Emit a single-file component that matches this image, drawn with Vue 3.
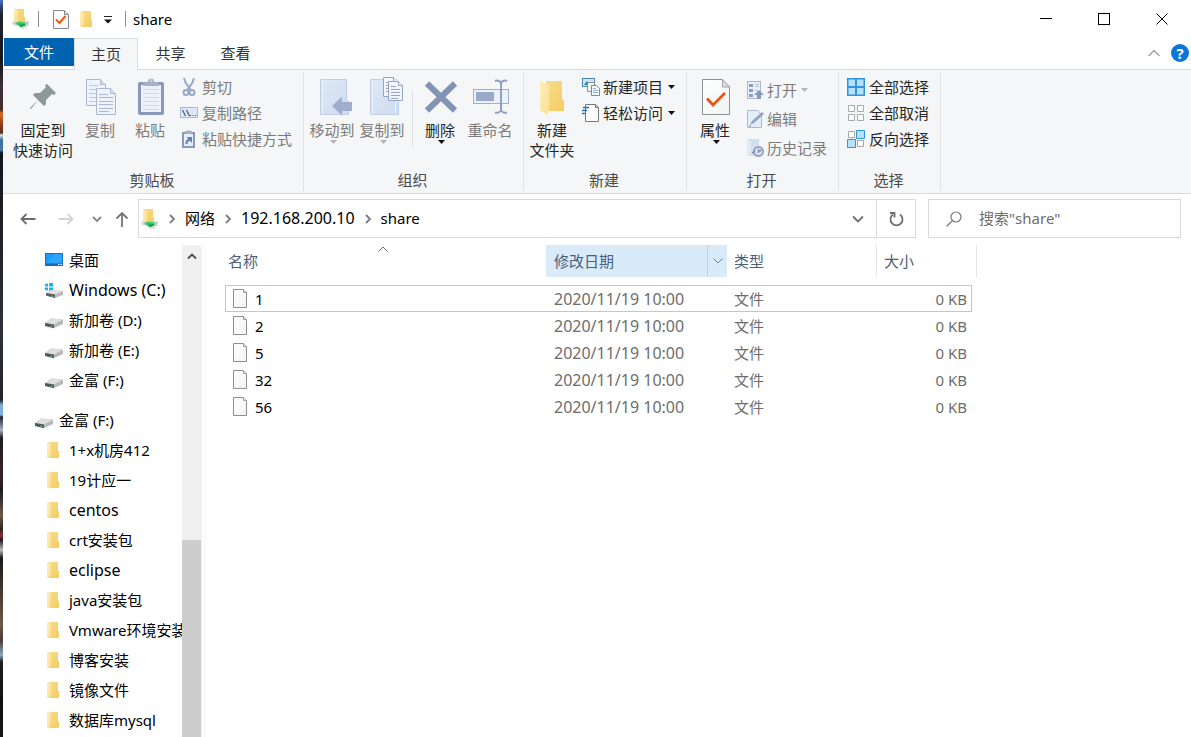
<script setup>
import { ref } from 'vue'

const query = ref('')
const drives = [
  { name: '桌面', icon: 'desktop' },
  { name: 'Windows (C:)', icon: 'windrive', latin: true },
  { name: '新加卷 (D:)', icon: 'drive' },
  { name: '新加卷 (E:)', icon: 'drive' },
  { name: '金富 (F:)', icon: 'drive' }
]
const folders = [
  { name: '1+x机房412' },
  { name: '19计应一' },
  { name: 'centos', latin: true },
  { name: 'crt安装包' },
  { name: 'eclipse', latin: true },
  { name: 'java安装包' },
  { name: 'Vmware环境安装' },
  { name: '博客安装' },
  { name: '镜像文件' },
  { name: '数据库mysql' }
]
const files = ['1', '2', '5', '32', '56']
</script>

<template>
  <div class="desktop">
    <svg width="0" height="0" class="defs" aria-hidden="true">
      <defs>
        <linearGradient id="gold" x1="0" y1="0" x2="1" y2="1">
          <stop offset="0" stop-color="#f8dc8c" /><stop offset="1" stop-color="#f3cd62" />
        </linearGradient>
        <linearGradient id="flap" x1="0" y1="0" x2="1" y2="1">
          <stop offset="0" stop-color="#ffeeb8" /><stop offset="1" stop-color="#fbdf92" />
        </linearGradient>
        <linearGradient id="paper" x1="0" y1="0" x2="1" y2="1">
          <stop offset="0" stop-color="#ffffff" /><stop offset="1" stop-color="#f1f3f4" />
        </linearGradient>
        <linearGradient id="bluefolder" x1="0" y1="0" x2="1" y2="1">
          <stop offset="0" stop-color="#dfe8f6" /><stop offset="1" stop-color="#cddcf0" />
        </linearGradient>
        <symbol id="folder" viewBox="0 0 14 18">
          <path d="M3 1h9v9h1v7H3z" fill="url(#gold)" />
          <path d="M1 1l4 2v11l-3 3-1-1z" fill="url(#flap)" />
        </symbol>
        <symbol id="netfolder" viewBox="0 0 18 20">
          <path d="M3 0h9v8h1v5H3z" fill="url(#gold)" />
          <path d="M2 0l4 2v10l-2 1-2-1z" fill="url(#flap)" />
          <path d="M0 13l3-1 3 3-2 2-3-1z" fill="#d3d7d9" />
          <path d="M11 15l4-3 2 1-1 4-4 1z" fill="#c6cbcd" />
          <path d="M7 17h6l2 2-4 1-4-1z" fill="#d9dcdd" />
          <path d="M3 14l4-1.500 7 1-1 3-4 1.500-4-2z" fill="#3cc96b" />
          <path d="M7 15.500l6-.5v1.500L9 18z" fill="#1b9c48" />
        </symbol>
        <symbol id="drive" viewBox="0 0 18 12">
          <path d="M0 6l6-4.500 12 1v4.500l-9 4-9-2.500z" fill="#b7b9bb" />
          <path d="M0 6l6-4.500 12 1-9 5z" fill="#dedfe0" />
          <path d="M0 6l9 1.500v3.800L0 9z" fill="#55595b" />
          <path d="M5.500 8.500l2 .4v1.200l-2-.4z" fill="#4bd65c" />
        </symbol>
        <symbol id="windrive" viewBox="0 0 20 18">
          <path d="M1 3l3-.5v3H1zM5 2.300l4-.6v3.800H5zM1 6.500h3v3L1 9zM5 6.500h4v3.800L5 9.700z" fill="#12b5ee" />
          <path d="M2 12l5-3 12 1v4l-8 3-9-2.500z" fill="#b9bbbd" />
          <path d="M2 12l5-3 12 1-8 3.500z" fill="#e2e3e4" />
          <path d="M2 12l9 1.500V17l-9-2.500z" fill="#5b5f61" />
          <path d="M7.500 14.500l2 .4v1.100l-2-.4z" fill="#4bd65c" />
        </symbol>
        <symbol id="desktop" viewBox="0 0 18 14">
          <rect x=".5" y=".5" width="17" height="12" fill="#1e9bf5" stroke="#0f76c4" />
          <path d="M1 11.500h16" stroke="#0d6fc0" stroke-width="2" />
          <path d="M13 11.500h1.500M15.500 11.500H17" stroke="#fff" />
          <path d="M1 10L11 1h6v9z" fill="#3bb0ff" opacity=".5" />
        </symbol>
        <symbol id="checkdoc" viewBox="0 0 28 36">
          <path d="M.5.500h20l7 7.500v27.500H.5z" fill="url(#paper)" stroke="#8c9093" />
          <path d="M20.500.500V8h7z" fill="#dcdfe1" stroke="#a2a5a8" />
        </symbol>
        <symbol id="chev" viewBox="0 0 12 12">
          <path d="M4 2l4 4-4 4" fill="none" stroke="#7b7b7b" stroke-width="1.800" />
        </symbol>
        <symbol id="blank" viewBox="0 0 16 19">
          <path d="M1.500.500h10l3 3v15h-13z" fill="url(#paper)" stroke="#8f8f8f" />
          <path d="M11.500.500v3h3" fill="#e6e6e6" stroke="#a0a0a0" />
        </symbol>
      </defs>
    </svg>

    <main class="window">
      <header class="titlebar">
        <svg class="ic-net" width="18" height="20"><use href="#netfolder" /></svg>
        <span class="bar"></span>
        <button class="quick check" aria-label="属性">
          <svg width="16" height="19" viewBox="0 0 16 19">
            <path d="M.5.500h11l4 4v14H.5z" fill="#fafafa" stroke="#85898c" /><path d="M11.500.500v4h4" fill="#ddd" stroke="#85898c" />
            <path d="M3 9.500L6.500 13 12.500 6" fill="none" stroke="#ee5a12" stroke-width="2" />
          </svg>
        </button>
        <button class="quick fold" aria-label="新建文件夹"><svg width="14" height="18"><use href="#folder" /></svg></button>
        <button class="quick more" aria-label="自定义快速访问工具栏">
          <svg width="8" height="8" viewBox="0 0 8 8"><path d="M0 .5h8" stroke="#222" /><path d="M0 3.500h8l-4 4z" fill="#111" /></svg>
        </button>
        <span class="bar"></span>
        <h1>share</h1>
        <div class="controls">
          <button aria-label="最小化"><svg width="12" height="12"><path d="M0 5.500h12" stroke="#000" /></svg></button>
          <button aria-label="最大化"><svg width="12" height="12"><rect x=".5" y=".5" width="11" height="11" fill="none" stroke="#000" /></svg></button>
          <button aria-label="关闭"><svg width="12" height="12"><path d="M.5.500l11 11M11.500.500l-11 11" stroke="#000" /></svg></button>
        </div>
      </header>

      <nav class="tabs">
        <button class="file">文件</button>
        <button class="active">主页</button>
        <button>共享</button>
        <button>查看</button>
        <span class="grow"></span>
        <button class="collapse" aria-label="折叠功能区"><svg width="12" height="8"><path d="M.5 7L6 1.500 11.500 7" fill="none" stroke="#a0a0a0" stroke-width="1.300" /></svg></button>
        <button class="help" aria-label="帮助">?</button>
      </nav>

      <div class="ribbon">
        <section class="group clip">
          <div class="body">
            <button class="big pin">
              <svg width="40" height="40"><path d="M24 8l9 9-2 2-2-1-6 6v4l-2 2-6-6-7 9-1-1 8-8-5-5 2-2h5l6-6-1-2z" fill="#8d9899" /></svg>
              <span>固定到<br>快速访问</span>
            </button>
            <button class="big off">
              <svg width="40" height="40" fill="#eef3fb" stroke="#a9b8d4">
                <path d="M6.500 3.500h14l5 5v21h-19z" /><path d="M20.500 3.500v5h5" fill="#d6e0f0" />
                <path d="M9 9.500h9M9 13.500h14M9 17.500h14M9 21.500h14M9 25.500h14" stroke="#bccbe3" />
                <path d="M16.500 12.500h14l5 5v21h-19z" /><path d="M30.500 12.500v5h5" fill="#d6e0f0" />
                <path d="M19 18.500h9M19 21.500h14M19 25.500h14M19 28.500h14M19 32.500h14M19 35.500h10" stroke="#a9b8d4" />
              </svg>
              <span>复制</span>
            </button>
            <button class="big off">
              <svg width="40" height="40">
                <rect x="8" y="6" width="26" height="33" rx="2" fill="#8999b9" /><rect x="11" y="9" width="20" height="27" fill="#eef3fb" />
                <path d="M13 13.500h16M13 17.500h16M13 21.500h16M13 25.500h16M13 29.500h16M13 33.500h16" stroke="#cdd9ec" />
                <path d="M13 10V7l5-1.500a3 3 0 0 1 6 0L29 7v3z" fill="#a7b2c8" /><circle cx="21" cy="4.500" r="1.500" fill="#c7cfde" />
              </svg>
              <span>粘贴</span>
            </button>
            <div class="smalls">
              <button class="off">
                <svg width="18" height="18" fill="none" stroke="#98a9c8" stroke-width="2"><path d="M4 0c1 6 4 8 7 12M14 0c-1 6-4 8-7 12" /><circle cx="6" cy="14.500" r="2.500" /><circle cx="12" cy="14.500" r="2.500" /></svg>
                <span>剪切</span>
              </button>
              <button class="off">
                <svg width="18" height="18"><rect x=".5" y="3.500" width="17" height="10" fill="#dde7f5" stroke="#a9bad6" /><path d="M2.500 6l3 6M6.500 6l3 6" stroke="#52627e" stroke-width="1.300" /><path d="M10 11.500h1.200M12.500 11.500h1.200M15 11.500h1.200" stroke="#52627e" /></svg>
                <span>复制路径</span>
              </button>
              <button class="off">
                <svg width="18" height="18"><path d="M3 3h11v14H3z" fill="#e6eef9" stroke="#8999b9" stroke-width="2" /><path d="M5 4V1h2l1.500-1L10 1h2v3z" fill="#a7b2c8" /><path d="M5.500 14c0-4 2-5 3-5l-2-2h5.500v6l-2-2c-2 0-2.500 1-2.500 3z" fill="#6e7fa3" /></svg>
                <span>粘贴快捷方式</span>
              </button>
            </div>
          </div>
          <h2>剪贴板</h2>
        </section>

        <section class="group org">
          <div class="body">
            <button class="big off">
              <svg width="40" height="40"><path d="M8.500 3.500h26v20l2 2v13h-28z" fill="url(#bluefolder)" stroke="#c0cfe6" /><path d="M10.500 4v34" stroke="#eaf0fa" /><path d="M20 30l10-9.500V26h10v9H30v4.500z" fill="#a0aecb" /></svg>
              <span>移动到</span><i class="tri"></i>
            </button>
            <button class="big off">
              <svg width="40" height="40" class="spill"><path d="M8.500 3.500h26v20l2 2v13h-28z" fill="url(#bluefolder)" stroke="#c0cfe6" /><path d="M10.500 4v34M33.500 38V27l2-2" stroke="#eaf0fa" fill="none" />
                <g fill="#f2f6fc" stroke="#94a5c6"><path d="M21.500 1.500h10l4 4v15h-14z" /><path d="M31.500 1.500v4h4M24 6.500h6M24 9.500h6M24 12.500h3M24 15.500h3" /><path d="M26.500 5.500h10l4 4v15h-14z" /><path d="M36.500 5.500v4h4M29 10.500h5M29 13.500h9M29 16.500h9M29 19.500h9M29 22.500h7" /></g></svg>
              <span>复制到</span><i class="tri"></i>
            </button>
            <span class="divider"></span>
            <button class="big">
              <svg width="40" height="40"><path d="M7 7.500l28 27M35 7.500l-28 27" stroke="#8293b5" stroke-width="6" /></svg>
              <span>删除</span><i class="tri"></i>
            </button>
            <button class="big off">
              <svg width="40" height="40"><rect x="3.500" y="13.500" width="35" height="14" fill="#eaf1fb" stroke="#9fb0cf" /><rect x="6" y="16" width="18" height="9" fill="#99a9c8" /><path d="M31 6v29M25 5c3-1 6 0 6 3 0-3 3-4 6-3M25 36.500c3 1 6-.5 6-3.500 0 3 3 4.500 6 3.500" fill="none" stroke="#8fa0c1" stroke-width="2" /></svg>
              <span>重命名</span>
            </button>
          </div>
          <h2>组织</h2>
        </section>

        <section class="group new">
          <div class="body">
            <button class="big">
              <svg width="40" height="40"><path d="M14 5h16v18l2 1v11H14z" fill="url(#gold)" /><path d="M8 5l9 4v26l-2 4-7-5z" fill="url(#flap)" /></svg>
              <span>新建<br>文件夹</span>
            </button>
            <div class="smalls">
              <button>
                <svg width="18" height="18"><rect x=".5" y=".5" width="12" height="8" fill="#cfe6f7" stroke="#4d88b0" /><path d="M2 7l3-4 3 4" fill="#26769e" /><path d="M5.500 4.500h7v9h-7z" fill="#f2f2f2" stroke="#8e9497" /><path d="M9.500 7.500h5l3 3v7h-8z" fill="#f5f8fc" stroke="#85898c" /><path d="M11 10.500h3M11 12.500h5M11 14.500h5" stroke="#8fb3d8" /></svg>
                <span>新建项目</span><i class="tri"></i>
              </button>
              <button>
                <svg width="18" height="18"><path d="M3.500.500h10l3 3v14h-13z" fill="#fbfbfb" stroke="#777b7e" /><path d="M13.500.500v3h3" fill="none" stroke="#777b7e" /><path d="M1 3.500h6M0 6.500h5M0 9.500h3" stroke="#2a6fa5" stroke-width="1.500" /></svg>
                <span>轻松访问</span><i class="tri"></i>
              </button>
            </div>
          </div>
          <h2>新建</h2>
        </section>

        <section class="group open">
          <div class="body">
            <button class="big">
              <svg width="40" height="40"><use href="#checkdoc" x="7" y="3" width="28" height="36" /><path d="M12 22.500l6 6.500L30 17" fill="none" stroke="#f0520f" stroke-width="2.800" /></svg>
              <span>属性</span><i class="tri"></i>
            </button>
            <div class="smalls">
              <button class="off">
                <svg width="18" height="18"><rect x=".5" y=".5" width="13" height="17" fill="#e9f0fa" stroke="#a8b7d2" /><path d="M2 3h4v3H2zM2 8h4v3H2zM2 13h4v3H2z" fill="#8c9dbf" /><path d="M8 3.500h4M8 5.500h4M8 9.500h3" stroke="#b3c1d9" /><path d="M12 9l5 5h-3v4h-4v-4H7z" fill="#8697b9" /></svg>
                <span>打开</span><i class="tri"></i>
              </button>
              <button class="off">
                <svg width="18" height="18"><path d="M.5.500h10l4 4v13H.5z" fill="#e5edf9" stroke="#a9b9d5" /><path d="M3 15l2-4L15 2l2 2-10 9z" fill="#93a4c4" /><path d="M2 16.500l2-1" stroke="#7184aa" /></svg>
                <span>编辑</span>
              </button>
              <button class="off">
                <svg width="18" height="18"><path d="M0 0h12v9h1v8H0z" fill="#d2dff1" /><path d="M0 0l4 3v12l-2 2-2-1z" fill="#e1eaf7" /><circle cx="11.500" cy="12.500" r="4.500" fill="#dce6f5" stroke="#94a5c4" stroke-width="2" /><path d="M11.500 10v3l3-2M5 14l3-2" stroke="#7b8db1" fill="none" stroke-width="1.500" /></svg>
                <span>历史记录</span>
              </button>
            </div>
          </div>
          <h2>打开</h2>
        </section>

        <section class="group select">
          <div class="body">
            <div class="smalls">
              <button>
                <svg width="18" height="18"><rect width="18" height="18" fill="#2f95e3" /><path d="M1.500 1.500h6.500v6.500H1.500zM10 1.500h6.500v6.500H10zM1.500 10h6.500v6.500H1.500zM10 10h6.500v6.500H10z" fill="#b8e2fb" /></svg>
                <span>全部选择</span>
              </button>
              <button>
                <svg width="18" height="18" fill="#fff" stroke="#a8a8a8"><path d="M1.500 1.500h6v6h-6zM10.500 1.500h6v6h-6zM1.500 10.500h6v6h-6zM10.500 10.500h6v6h-6z" /></svg>
                <span>全部取消</span>
              </button>
              <button>
                <svg width="18" height="18" fill="#fff" stroke="#a8a8a8"><path d="M1.500 1.500h6v6h-6zM10.500 10.500h6v6h-6z" /><path d="M9.500.500h8v8h-8zM.5 9.500h8v8h-8z" fill="#b8e2fb" stroke="#2f95e3" /></svg>
                <span>反向选择</span>
              </button>
            </div>
          </div>
          <h2>选择</h2>
        </section>
      </div>

      <div class="location">
        <button class="nav-b" aria-label="后退"><svg width="16" height="12" fill="none" stroke="#6d6d6d" stroke-width="1.800"><path d="M15.500 6H1.500M6.500 1l-5 5 5 5" /></svg></button>
        <button class="nav-b" aria-label="前进"><svg width="16" height="12" fill="none" stroke="#d4d4d4" stroke-width="1.800"><path d="M.5 6h14M9.500 1l5 5-5 5" /></svg></button>
        <button class="nav-c" aria-label="最近浏览的位置"><svg width="10" height="8"><path d="M1 2l4 4 4-4" fill="none" stroke="#858585" stroke-width="1.800" /></svg></button>
        <button class="nav-u" aria-label="上移"><svg width="14" height="16" fill="none" stroke="#757575" stroke-width="1.800"><path d="M7 16V2M1.500 7.500L7 2l5.500 5.500" /></svg></button>
        <div class="address">
          <svg width="18" height="20"><use href="#netfolder" /></svg>
          <svg class="sep" width="12" height="12"><use href="#chev" /></svg>
          <a href="#network">网络</a>
          <svg class="sep" width="12" height="12"><use href="#chev" /></svg>
          <a href="#host" class="latin">192.168.200.10</a>
          <svg class="sep" width="12" height="12"><use href="#chev" /></svg>
          <a href="#share">share</a>
          <span class="grow"></span>
          <button class="drop" aria-label="以前的位置"><svg width="12" height="8"><path d="M1 1.500l5 5 5-5" fill="none" stroke="#707070" stroke-width="1.800" /></svg></button>
          <button class="refresh" aria-label="刷新"><svg width="16" height="16" fill="none" stroke="#707070" stroke-width="1.800"><path d="M12 3.500a6 6 0 1 1-7 0" /><path d="M2 2h4.500v4.500" /></svg></button>
        </div>
        <label class="search">
          <svg width="16" height="16" fill="none" stroke="#7a7a7a" stroke-width="1.200"><circle cx="10" cy="6" r="5" /><path d="M6.500 9.500L.5 15.500" /></svg>
          <input v-model="query" type="text" placeholder='搜索"share"' aria-label="搜索">
        </label>
      </div>

      <div class="content">
        <aside class="tree">
          <ul>
            <li v-for="d in drives" :key="d.name">
              <svg v-if="d.icon === 'desktop'" width="18" height="14"><use href="#desktop" /></svg>
              <svg v-else-if="d.icon === 'windrive'" class="win" width="20" height="18"><use href="#windrive" /></svg>
              <svg v-else class="drv" width="18" height="12"><use href="#drive" /></svg>
              <span :class="{ latin: d.latin }">{{ d.name }}</span>
            </li>
          </ul>
          <ul class="second">
            <li class="root"><svg class="drv" width="18" height="12"><use href="#drive" /></svg><span>金富 (F:)</span></li>
            <li v-for="f in folders" :key="f.name">
              <svg class="fol" width="14" height="18"><use href="#folder" /></svg>
              <span :class="{ latin: f.latin }">{{ f.name }}</span>
            </li>
          </ul>
        </aside>
        <div class="scroll">
          <button aria-label="向上滚动"><svg width="10" height="8"><path d="M1 6.500l4-4 4 4" fill="none" stroke="#4d4d4d" stroke-width="1.800" /></svg></button>
          <div class="thumb"></div>
        </div>
        <div class="files">
          <table>
            <colgroup><col class="c1"><col class="c2"><col class="c3"><col class="c4"><col class="c5"></colgroup>
            <thead>
              <tr>
                <th class="name">名称<svg class="sort" width="10" height="6"><path d="M.5 5.500L5 1l4.500 4.500" fill="none" stroke="#6b6b6b" /></svg></th>
                <th class="date"><div><span>修改日期</span><button aria-label="筛选"><svg width="10" height="6"><path d="M.5.500L5 5 9.500.500" fill="none" stroke="#6f8396" /></svg></button></div></th>
                <th>类型</th>
                <th colspan="2" class="size">大小</th>
              </tr>
            </thead>
            <tbody>
              <tr v-for="(f, i) in files" :key="f" :class="{ focused: i === 0 }">
                <td class="fname"><div><svg width="16" height="19"><use href="#blank" /></svg><span>{{ f }}</span></div></td>
                <td class="latin">2020/11/19 10:00</td>
                <td>文件</td>
                <td class="kb">0 KB</td>
                <td class="end"></td>
              </tr>
            </tbody>
          </table>
        </div>
      </div>
    </main>
  </div>
</template>

<style>
body { overflow: hidden; }
</style>

<style scoped>
* { box-sizing: border-box; }
.desktop {
  display: flex;
  height: 100vh;
  padding-left: 3px;
  background: linear-gradient(#4a78c4, #2c4a80 6px, #20242e 14px, #17181f 60px, #3d3033 85px, #40302c 110px, #e06c1c 113px, #8a3a1c 125px, #5a3020 133px, #dfe6ee 135px, #3b6ea0 140px, #4a78a8 150px, #14151a 153px, #1c1d24 200px, #2d2f3c 330px, #22232c 400px, #7fb0d8 405px, #7fb0d8 415px, #22232c 417px, #a8b4c4 430px, #1c1c22 438px, #3a2228 475px, #1d1b20 490px, #6e5844 515px, #2b2422 530px, #9c2d2d 535px, #1d1a1c 540px, #b9bcc2 550px, #1d1a1c 558px, #6e5844 625px, #4a3a30 640px, #8aa8c0 655px, #201e20 662px, #101013 700px, #16161a);
  font: 15px/20px "Noto Sans", "Noto Sans CJK SC", sans-serif;
  color: #000;
}
.defs { position: absolute; }
svg { display: block; flex: none; }
button { border: 0; padding: 0; margin: 0; background: none; font: inherit; color: inherit; display: flex; align-items: center; justify-content: center; flex: none; white-space: nowrap; }
h1, h2, ul { margin: 0; padding: 0; font: inherit; list-style: none; }
.grow { flex: 1; }
.latin { font-size: 16px; }
.window { flex: 1; min-width: 0; display: flex; flex-direction: column; background: #fff; }

.titlebar { display: flex; align-items: center; height: 38px; padding-left: 9px; }
.bar { width: 1px; height: 16px; background: #8f8f8f; }
.ic-net { margin-right: 8px; }
.check { margin-left: 14px; }
.fold { margin-left: 10px; }
.more { width: 8px; margin: 2px 13px 0 11px; }
.titlebar h1 { margin-left: 7px; flex: 1; }
.controls { display: flex; }
.controls button { width: 58px; height: 38px; }

.tabs { display: flex; height: 32px; padding-left: 1px; border-bottom: 1px solid #d9dadb; color: #333; }
.tabs button { width: 65px; height: 30px; }
.tabs .file { width: 70px; height: 28px; background: #0063b1; color: #fff; }
.tabs .active { width: 64px; height: 32px; padding-bottom: 2px; background: #f5f6f7; border: 1px solid #d9dadb; border-bottom: 0; }
.tabs .collapse { width: 20px; }
.tabs .help { width: 18px; height: 18px; margin: 6px 2px 0 7px; border-radius: 9px; background: #0a76d8; color: #fff; font-weight: 700; }

.ribbon { display: flex; flex: none; height: 124px; background: #f5f6f7; border-bottom: 1px solid #d9dadb; }
.group { display: flex; flex-direction: column; justify-content: space-between; margin: 2px 0; padding: 4px 0 1px; border-right: 1px solid #e0e1e3; color: #262626; }
.group h2 { padding-right: 2px; text-align: center; color: #4a4a4a; }
.body { display: flex; align-items: flex-start; }
.clip { width: 301px; }
.clip .body { padding-left: 8px; }
.org { width: 220px; }
.org .body { padding-left: 3px; }
.new { width: 163px; }
.open { width: 152px; }
.select { width: 102px; }
.big { width: 50px; flex-direction: column; justify-content: flex-start; }
.big svg { margin-bottom: 4px; }
.spill { overflow: visible; }
.pin { width: 64px; }
.new .big, .open .big { width: 56px; }
.off { color: #7b7b7b; }
.tri { width: 7px; height: 4px; background: #111; clip-path: polygon(0 0, 100% 0, 50% 100%); }
.big .tri { margin-left: 3px; }
.off .tri { background: #b3b3b3; }
.divider { width: 1px; height: 55px; margin: 15px 2px 0 5px; background: #dcdde0; }
.smalls { display: flex; flex-direction: column; align-items: flex-start; gap: 6px; }
.smalls button { gap: 3px; height: 20px; }
.clip .smalls { margin: 1px 0 0 5px; }
.clip .smalls button { gap: 4px; }
.new .smalls { margin: 1px 0 0 2px; }
.open .smalls { margin: 4px 0 0 4px; gap: 9px; }
.open .smalls button { gap: 2px; }
.select .smalls { margin: 1px 0 0 8px; }
.select .smalls button { gap: 4px; }
.smalls .tri { margin-left: 2px; }

.location { display: flex; align-items: center; flex: none; height: 49px; margin-bottom: 2px; padding: 0 10px 0 6px; }
.nav-b { width: 38px; height: 30px; }
.nav-c { width: 24px; height: 30px; }
.nav-u { width: 26px; height: 30px; margin-right: 3px; }
.address { display: flex; align-items: center; flex: 1; min-width: 0; height: 39px; margin-right: 12px; padding-left: 2px; border: 1px solid #d9d9d9; }
.address a { padding-bottom: 2px; color: #000; text-decoration: none; }
.sep { margin: 0 7px; }
.drop { width: 36px; height: 37px; }
.refresh { width: 39px; height: 37px; border-left: 1px solid #d9d9d9; }
.search { display: flex; align-items: center; width: 253px; height: 39px; padding-left: 17px; border: 1px solid #d9d9d9; }
.search input { flex: 1; min-width: 0; margin-left: 17px; padding: 0 0 2px; border: 0; outline: 0; font: inherit; }
.search input::placeholder { color: #6d6d6d; opacity: 1; }

.content { display: flex; flex: 1; min-height: 0; }
.tree { width: 179px; overflow: hidden; }
.tree li { display: flex; align-items: center; height: 30px; padding-left: 42px; gap: 6px; white-space: nowrap; }
.tree .second { margin-top: 10px; }
.tree .root { padding-left: 32px; }
.tree .drv { margin-top: 6px; }
.tree .win { margin: 0 -1px; }
.tree .fol { margin: 0 3px 0 1px; }
.scroll { display: flex; flex-direction: column; justify-content: space-between; width: 20px; background: #f0f0f0; }
.scroll button { height: 22px; }
.thumb { height: 40%; width: 19px; background: #cdcdcd; }
.files { flex: 1; min-width: 0; margin-left: 2px; padding-left: 20px; border-left: 1px solid #f5f5f5; }
table { width: 752px; table-layout: fixed; border-collapse: separate; border-spacing: 0; }
.c1 { width: 321px; }
.c2 { width: 181px; }
.c3 { width: 150px; }
.c4 { width: 95px; }
.c5 { width: 5px; }
th { position: relative; height: 32px; padding: 0 7px; font-weight: 400; text-align: left; color: #4c607a; border-right: 1px solid #e5e5e5; }
th.name { padding-left: 3px; border: 0; }
th.date { padding: 0; background: #d9ebf9; border: 0; }
th.date div { display: flex; align-items: center; height: 32px; padding-left: 8px; }
th.date span { flex: 1; }
th.date button { width: 20px; height: 32px; border-left: 1px solid #bdd3e4; }
.sort { position: absolute; top: 1px; left: 153px; }
tbody::before { content: ""; display: block; height: 8px; }
td { height: 27px; padding: 0 7px; color: #6d6d6d; white-space: nowrap; border: 0 solid transparent; border-width: 1px 0; }
td.latin { padding-left: 8px; }
td.fname { padding: 0 6px; color: #000; border-left-width: 1px; }
td.fname div { display: flex; align-items: center; gap: 7px; }
td.kb { padding: 0 4px; text-align: right; border-right-width: 1px; }
td.end { padding: 0; }
tr.focused td { border-color: #99d1ff; }
tr.focused td.end { border-color: transparent; }
</style>
